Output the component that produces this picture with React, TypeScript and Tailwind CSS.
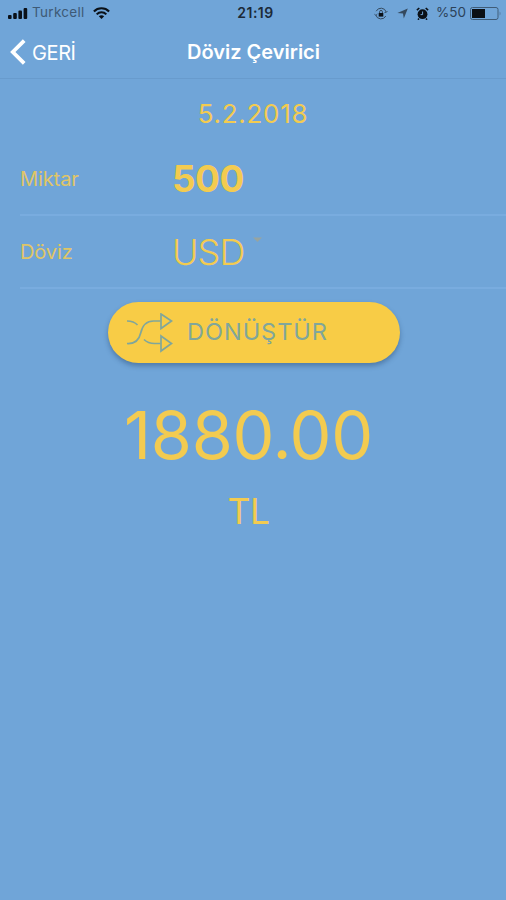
import type { ReactNode } from "react";

function StatusBar() {
  return (
    <div className="h-[26px] px-2 grid grid-cols-[1fr_auto_1fr] items-center text-[13px] leading-none text-[#1c2a38]">
      <div className="flex items-center">
        <svg width="20" height="12" viewBox="0 0 20 12" fill="#0b1118">
          <rect x="0" y="8" width="3.6" height="4" rx="1" />
          <rect x="5.2" y="6" width="3.6" height="6" rx="1" />
          <rect x="10.4" y="3.5" width="3.6" height="8.5" rx="1" />
          <rect x="15.6" y="1" width="3.6" height="11" rx="1" />
        </svg>
        <span className="ml-1 text-[#3e5a76] text-[13.5px] tracking-[0.3px]">Turkcell</span>
        <svg className="ml-2" width="17" height="12" viewBox="0 0 17 12" fill="none" stroke="#0b1118" strokeWidth="2.1">
          <path d="M0.9 4.4C5 0.2 12 0.2 16.1 4.4" />
          <path d="M3.7 7.4C6.3 4.6 10.7 4.6 13.3 7.4" />
          <path d="M8.5 12L5.8 9.2C7.3 7.8 9.7 7.8 11.2 9.2Z" fill="#0b1118" stroke="none" />
        </svg>
      </div>
      <span className="pl-[5px] text-[14px] font-semibold tracking-[0.5px]">21:19</span>
      <div className="flex items-center justify-end -mr-[6px]">
        {/* Rotation lock */}
        <svg width="14" height="13" viewBox="0 0 14 13" fill="none" stroke="#34495e">
          <path d="M2.2 4.2A5.4 5.4 0 0 1 12.2 5M11.8 9A5.4 5.4 0 0 1 1.8 8" />
          <path d="M0.4 6.8L1.7 8.4L3.4 7M10.4 5.6L12.3 5.4L13.5 4" strokeWidth="0.8" />
          <rect x="4.7" y="6" width="4.6" height="3.6" fill="#0b1118" stroke="none" />
          <path d="M5.6 6V4.8A1.4 1.4 0 0 1 8.4 4.8V6" />
        </svg>
        <svg className="ml-[9px]" width="11" height="11" viewBox="0 0 11 11" fill="#34495e">
          <path d="M10.8 0.4L6.8 10.4L6 5.4L0.4 5Z" />
        </svg>
        <svg className="ml-2" width="13" height="13" viewBox="0 0 13 13" fill="none" stroke="#0b1118">
          <circle cx="6.5" cy="7.2" r="4.9" fill="#0b1118" stroke="none" />
          <path d="M0.9 3.2L3.3 1M12.1 3.2L9.7 1M3 11.5L2 12.7M10 11.5L11 12.7" strokeWidth="1.6" />
          <path d="M6.6 4.5V7.6H4.6" stroke="#70a5d8" />
        </svg>
        <span className="ml-[7px] text-[13.5px] text-[#2c4258]">%50</span>
        <svg className="ml-1" width="34" height="13" viewBox="0 0 34 13">
          <rect x="0.5" y="0.5" width="27.5" height="12" rx="2" fill="none" stroke="#3f5c78" />
          <rect x="2" y="2" width="13" height="9" fill="#0b0f14" />
          <path d="M29.5 4.5C31 5 31 8 29.5 8.5Z" fill="#5880a8" />
        </svg>
      </div>
    </div>
  );
}

function NavBar() {
  return (
    <header className="h-[53px] border-b border-[#689bcd] grid grid-cols-[1fr_auto_1fr] items-center text-white">
      <button className="flex items-center pl-[10px] text-left">
        <svg width="16" height="26" viewBox="0 0 16 26" fill="none" stroke="currentColor" strokeWidth="3.8">
          <path d="M14.2 1.6L2.8 13L14.2 24.4" />
        </svg>
        <span className="ml-[6px] pt-px text-[20px] tracking-[-0.4px]">GERİ</span>
      </button>
      <h1 className="pl-px text-[20px] font-semibold">Döviz Çevirici</h1>
      <span />
    </header>
  );
}

function Field({ label, children }: { label: string; children: ReactNode }) {
  return (
    <div className="ml-5 h-[73px] flex items-center border-b-2 border-[#79acdf]">
      <span className="w-[152px] pt-px text-[20px] tracking-[-0.1px] text-[#e0c566]">{label}</span>
      {children}
    </div>
  );
}

function ShuffleIcon() {
  return (
    <svg width="47" height="40" viewBox="0 0 46 40" fill="none" stroke="currentColor" strokeWidth="1.7">
      <path d="M0.5 8C5 8 8.5 9.3 11 12" />
      <path d="M0.5 30.5C8 31 12.5 27.5 14.2 20C16 12 20 8 27 8H34" />
      <path d="M17.5 26.5C20.5 29.5 24 30.5 28 30.5H34" />
      <path d="M34.5 1L45 8L34.5 15.5ZM34.5 23L45 30.5L34.5 38Z" />
    </svg>
  );
}

export default function App() {
  return (
    <div className="h-screen overflow-hidden bg-[#70a5d8] font-['Inter','Liberation_Sans',sans-serif] text-[#f3cb50]">
      <StatusBar />
      <NavBar />
      <main className="flex flex-col">
        <p className="h-16 pt-[5px] flex items-center justify-center text-[26px] tracking-[0.7px]">5.2.2018</p>
        <Field label="Miktar">
          <span className="text-[37px] font-bold tracking-[-0.6px]">500</span>
        </Field>
        <Field label="Döviz">
          <span className="text-[36px] font-[350] tracking-[-0.9px]">USD</span>
          <svg className="ml-[9px] mb-6" width="9" height="5" viewBox="0 0 9 5">
            <path d="M0 0.5H9L4.5 5Z" fill="#97a4a0" />
          </svg>
        </Field>
        <button className="mt-[13px] ml-[108px] h-[61px] w-[292px] pl-[18px] flex items-center rounded-full bg-[#f8cc46] text-[#80a69b] shadow-[0_3px_5px_rgba(30,60,100,0.4)]">
          <ShuffleIcon />
          <span className="ml-[14px] pb-px text-[23.5px] tracking-[1px]">DÖNÜŞTÜR</span>
        </button>
        <p className="mt-[31px] -ml-[9px] text-center text-[66.5px] leading-[82px] tracking-[-0.3px]">1880.00</p>
        <p className="mt-[14px] -ml-[9px] text-center text-[35.5px] leading-[44px] tracking-[-0.5px]">TL</p>
      </main>
    </div>
  );
}
